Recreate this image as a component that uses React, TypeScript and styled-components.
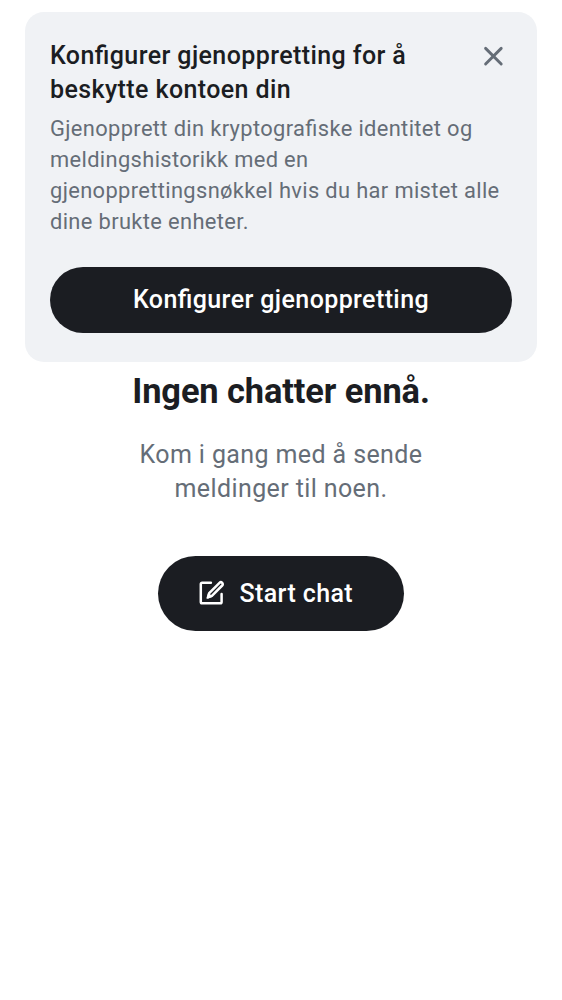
import React from "react";
import styled, { createGlobalStyle } from "styled-components";

const Global = createGlobalStyle`
  * { box-sizing: border-box; }
  body { margin: 0; background: #fff; font-family: Roboto, sans-serif; font-feature-settings: "liga" 1; }
`;
const Screen = styled.main`
  min-height: 1000px;
  padding: 12px 25px 0;
  display: flex;
  flex-direction: column;
  align-items: center;
  background: #fff;
`;
const Banner = styled.section`
  width: 512px;
  height: 350.4px;
  padding: 26.5px 25px 25px;
  border-radius: 19px;
  background: #f0f2f5;
  display: flex;
  flex-direction: column;
`;
const BannerHead = styled.div`
  display: flex;
  justify-content: space-between;
  align-items: flex-start;
`;
const BannerTitle = styled.h2`
  margin: 0;
  width: 400px;
  font-size: 25px;
  line-height: 34.4px;
  font-weight: 500;
  letter-spacing: 0.4px;
  color: #1b1d22;
`;
const Close = styled.button`
  width: 37px;
  height: 37px;
  padding: 0;
  border: 0;
  background: none;
  color: #656d77;
  display: grid;
  place-items: center;
`;
const BannerText = styled.p`
  margin: 5.3px 0 0;
  font-size: 21.875px;
  line-height: 31.25px;
  letter-spacing: 0.36px;
  color: #656d77;
`;
const Button = styled.button<{ $wide?: boolean }>`
  width: ${(p) => (p.$wide ? "100%" : "246px")};
  height: ${(p) => (p.$wide ? "66px" : "75px")};
  flex: none;
  margin: ${(p) => (p.$wide ? "29.7px 0 0" : "49.8px 0 0")};
  padding: ${(p) => (p.$wide ? "0" : "0 12.5px 0 0")};
  border: 0;
  border-radius: 40px;
  background: #1b1d22;
  color: #fff;
  font: 500 25px/34px Roboto, sans-serif;
  font-feature-settings: "liga" 1;
  letter-spacing: 0.4px;
  display: flex;
  align-items: center;
  justify-content: center;
  gap: 12px;
`;
const Heading = styled.h1`
  margin: 6.6px 0 0;
  font-size: 34.4px;
  line-height: 44px;
  font-weight: 700;
  letter-spacing: -0.1px;
  color: #1b1d22;
`;
const Message = styled.p`
  margin: 24.7px 0 0;
  width: 320px;
  text-align: center;
  font-size: 25px;
  line-height: 34.4px;
  letter-spacing: 0.39px;
  color: #656d77;
`;

export default function App() {
  return (
    <>
      <Global />
      <Screen>
        <Banner>
          <BannerHead>
            <BannerTitle>Konfigurer gjenoppretting for å<br />beskytte kontoen din</BannerTitle>
            <Close aria-label="Lukk">
              <svg width="37" height="37" viewBox="0 0 37 37" fill="none" stroke="currentColor" strokeWidth="2.9" strokeLinecap="round">
                <path d="M10.6 9.4 26.2 25M26.2 9.4 10.6 25" />
              </svg>
            </Close>
          </BannerHead>
          <BannerText>
            Gjenopprett din kryptografiske identitet og<br />meldingshistorikk med en<br />
            gjenopprettingsnøkkel hvis du har mistet alle<br />dine brukte enheter.
          </BannerText>
          <Button $wide>Konfigurer gjenoppretting</Button>
        </Banner>
        <Heading>Ingen chatter ennå.</Heading>
        <Message>Kom i gang med å sende<br />meldinger til noen.</Message>
        <Button>
          <svg width="31" height="31" viewBox="0 0 31 31" fill="none" stroke="currentColor" strokeWidth="2.5" strokeLinecap="round" strokeLinejoin="round">
            <path d="M14.9 4.8H6.1a1.3 1.3 0 0 0-1.3 1.3v17.8a1.3 1.3 0 0 0 1.3 1.3h18.2a1.3 1.3 0 0 0 1.3-1.3v-8" />
            <path d="m13.2 15.1 10.3-10.3a1.9 1.9 0 0 1 2.7 2.7L15.9 17.8l-3.9 1.6z" />
            <path d="m12.8 15.4 3.2 3.2-4.8 1.7z" fill="currentColor" strokeWidth="0.8" />
          </svg>
          Start chat
        </Button>
      </Screen>
    </>
  );
}
